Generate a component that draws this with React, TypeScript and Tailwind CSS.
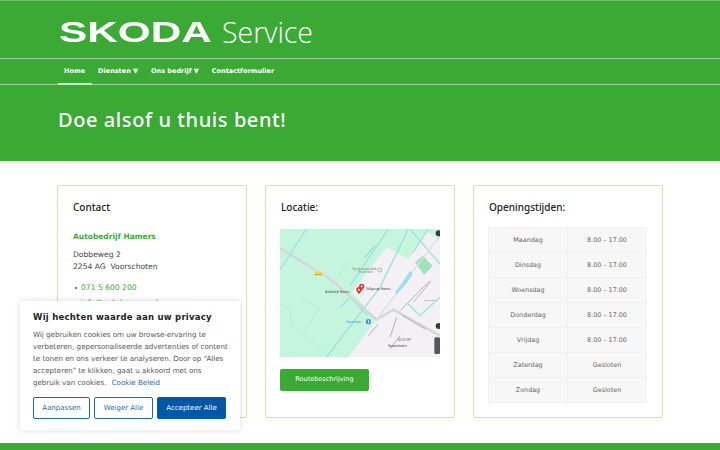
import React from 'react';

const hours = [
  ['Maandag', '8.00 – 17.00'],
  ['Dinsdag', '8.00 – 17.00'],
  ['Woensdag', '8.00 – 17.00'],
  ['Donderdag', '8.00 – 17.00'],
  ['Vrijdag', '8.00 – 17.00'],
  ['Zaterdag', 'Gesloten'],
  ['Zondag', 'Gesloten'],
];

const MapPicture: React.FC = () => (
  <svg viewBox="0 0 480 384" className="block w-full h-full blur-[0.3px]" style={{ fontFamily: '"Liberation Sans", sans-serif' }}>
    <rect width="480" height="384" fill="#c6f5dd" />
    {/* built up area */}
    <polygon points="215,190 320,55 385,90 440,10 480,30 480,384 205,384 290,270" fill="#f3f1f4" />
    <polygon points="405,100 428,80 458,110 432,138" fill="#9fe3bd" />
    {/* canals */}
    <g fill="none" stroke="#a0dfe6" strokeWidth="4">
      <path d="M0 122 L80 0" />
      <path d="M210 170 L325 0" />
      <path d="M180 235 L210 205 L265 262" />
      <path d="M140 384 L212 290 L300 175 L385 0" />
      <path d="M390 0 L480 105" />
      <path d="M445 0 L400 70" />
      <path d="M385 225 L420 260 L480 205" />
    </g>
    <g fill="none" stroke="#a8ead0" strokeWidth="2">
      <path d="M65 210 L120 237 L75 300" />
      <path d="M0 228 L30 240 L35 290 L150 384" />
      <path d="M150 170 L210 95" />
    </g>
    {/* roads */}
    <g fill="none" stroke="#d3d6dc" strokeWidth="7">
      <path d="M0 58 L150 150 L290 272 L340 242 L480 320" />
      <path d="M295 265 L480 20" strokeWidth="4" stroke="#dcdee2" />
    </g>
    <g fill="none" stroke="#b0b4bb" strokeWidth="3">
      <path d="M255 85 L285 50" stroke="#8fc9b0" />
      <path d="M360 245 L450 155" />
      <path d="M400 220 L452 158" />
      <path d="M365 258 L435 300" />
      <path d="M265 320 L295 285" />
      <path d="M330 325 L350 265" />
      <path d="M330 360 L360 320" />
    </g>
    <path d="M345 190 C 360 170, 375 150, 390 125 L398 135 C 385 160, 365 180, 350 195 Z" fill="#9fdcf0" />
    <rect x="463" y="325" width="17" height="50" rx="4" fill="#55585c" />
    <circle cx="476" cy="291" r="9" fill="#3a3c3f" />
    <circle cx="476" cy="13" r="9" fill="#3a3c3f" />
    {/* shield */}
    <rect x="103" y="129" width="24" height="11" rx="2" fill="#f7d154" />
    <text x="115" y="137.5" textAnchor="middle" fontSize="7" fill="#5b4a10">N448</text>
    {/* labels */}
    <text x="217" y="122" fontSize="8" fill="#7d8a85">Fysiotherapiepraktijk</text>
    <text x="235" y="133" fontSize="8" fill="#7d8a85">Voorschoten</text>
    <circle cx="299" cy="123" r="6" fill="none" stroke="#8a9490" strokeWidth="2" />
    <text x="136" y="191" fontSize="8.5" fill="#4a4a4a">Autobedrijf Hamers</text>
    <text x="258" y="182" fontSize="8.5" fill="#4a4a4a">Valkgarage Hamers</text>
    <text x="199" y="281" fontSize="8" fill="#4b8fe0">Voorschoten</text>
    <rect x="258" y="271" width="14" height="14" rx="3" fill="#4b8fe0" />
    <rect x="264" y="274" width="2.5" height="8" fill="#ffffff" />
    <text x="354" y="336" fontSize="8" fill="#6e6e6e">BLIJDORP</text>
    <text x="324" y="355" fontSize="10" fill="#3c3c3c">Voorschoten</text>
    <text x="432" y="215" fontSize="7" fill="#7b7f85">Bijdorplaan</text>
    {/* pins */}
    <g fill="#e0352b">
      <path d="M245 164 a8 8 0 0 1 8 8 c0 5 -5 8 -8 13 c-3 -5 -8 -8 -8 -13 a8 8 0 0 1 8 -8 Z" />
      <path d="M237 174 a8 8 0 0 1 8 8 c0 5 -5 8 -8 14 c-3 -6 -8 -9 -8 -14 a8 8 0 0 1 8 -8 Z" />
    </g>
    <circle cx="245" cy="172" r="3" fill="#ffffff" />
    <circle cx="237" cy="182" r="3" fill="#ffffff" />
  </svg>
);

const Card: React.FC<{ children: React.ReactNode }> = ({ children }) => (
  <div className="h-[233px] rounded-[3px] border border-[#dcdcb8] bg-white px-[15px] pt-[13px] shadow-[0_0_1px_#dcdcb8]">{children}</div>
);

const heading = "text-[10px] leading-[16px] font-medium text-[#222222] [font-family:'Noto_Sans',sans-serif]";

export default function App() {
  return (
    <div className="relative h-[450px] w-[720px] overflow-hidden bg-white text-[#444444] [font-family:'DejaVu_Sans',sans-serif]">
      <header className="h-[161px] bg-[#3aaa35] text-white">
        <div className="h-[59px] border-t border-b border-t-[#6cc067] border-b-[#9ad596] pl-[59px] flex items-center">
          <div className="flex items-center pt-[4px]">
            <span className="inline-block w-[153px] origin-left scale-x-[1.41] text-[30px] leading-[30px] font-bold [font-family:'Liberation_Sans',sans-serif]">
              SKODA
            </span>
            <span className="ml-[10px] text-[28.5px] leading-[30px] font-light [font-family:'Open_Sans',sans-serif]">
              Service
            </span>
          </div>
        </div>
        <nav className="h-[26px] border-b border-[#9ad596] pl-[57.5px] flex text-[6.5px] font-bold">
          <a className="flex items-center px-[6.5px] border-b-2 border-[#c8e8c5] -mb-[1px] pt-[1px]">Home</a>
          <a className="flex items-center px-[6.5px]">Diensten ▼</a>
          <a className="flex items-center px-[6.5px]">Ons bedrijf ▼</a>
          <a className="flex items-center px-[6.5px]">Contactformulier</a>
        </nav>
        <h1 className="pl-[58px] pt-[20px] text-[20px] leading-[30px] font-medium tracking-[0.58px] [font-family:'Noto_Sans',sans-serif]">
          Doe alsof u thuis bent!
        </h1>
      </header>

      <main className="mx-auto mt-[24px] grid w-[606px] grid-cols-3 gap-[18px]">
        <Card>
          <h2 className={heading}>Contact</h2>
          <p className="mt-[15px] text-[7.5px] leading-[13px] font-bold text-[#3aaa35]">Autobedrijf Hamers</p>
          <p className="mt-[6px] text-[7.6px] leading-[12px]">
            Dobbeweg 2
            <br />
            2254 AG&nbsp; Voorschoten
          </p>
          <ul className="mt-[7px] text-[7.6px] leading-[15px] text-[#3aaa35]">
            <li className="flex items-center gap-[4px] pl-[2px]">
              <span className="h-[2px] w-[2px] rounded-full bg-[#444444]" />
              071 5 600 200
            </li>
            <li className="flex items-center gap-[4px] pl-[2px]">
              <span className="h-[2px] w-[2px] rounded-full bg-[#444444]" />
              info@autohamers.nl
            </li>
          </ul>
        </Card>
        <Card>
          <h2 className={heading}>Locatie:</h2>
          <div className="mt-[14px] h-[128px] w-[160px] -ml-[1px]">
            <MapPicture />
          </div>
          <button className="mt-[12px] -ml-[1px] h-[22px] w-[89px] rounded-[2px] bg-[#3aaa35] text-[6.5px] text-white">
            Routebeschrijving
          </button>
        </Card>
        <Card>
          <h2 className={heading}>Openingstijden:</h2>
          <table className="mt-[12px] w-[159px] -ml-[1px] table-fixed border-collapse text-center text-[6.4px] text-[#666666]">
            <tbody>
              {hours.map(([day, time]) => (
                <tr key={day} className="h-[25px] bg-[#f7f7f7]">
                  <td className="border border-[#f0f0f0] pt-[1px]">{day}</td>
                  <td className="border border-[#f0f0f0] pt-[1px]">{time}</td>
                </tr>
              ))}
            </tbody>
          </table>
        </Card>
      </main>

      <footer className="absolute bottom-0 left-0 h-[7px] w-full bg-[#3aaa35]" />

      {/* cookie banner */}
      <div className="absolute left-[20px] top-[301px] h-[129px] w-[220px] rounded-[3px] bg-white pl-[13px] pr-[11px] pt-[10px] shadow-[0_0_6px_rgba(0,0,0,0.15)]">
        <h3 className="text-[8.5px] leading-[13px] font-bold tracking-[0.25px] text-[#212121] whitespace-nowrap">
          Wij hechten waarde aan uw privacy
        </h3>
        <p className="mt-[5px] text-[7.1px] leading-[12px] text-[#555555]">
          Wij gebruiken cookies om uw browse-ervaring te verbeteren, gepersonaliseerde advertenties of content te tonen en ons verkeer te analyseren. Door op “Alles accepteren” te klikken, gaat u akkoord met ons gebruik van cookies.{' '}
          <a className="ml-[3px] text-[#25689f]">Cookie Beleid</a>
        </p>
        <div className="mt-[8px] flex gap-[4px] text-[7px]">
          <button className="h-[22px] w-[57px] rounded-[2px] border-[1.5px] border-[#1f6a9c] text-[#2d6b9f]">Aanpassen</button>
          <button className="h-[22px] w-[59px] rounded-[2px] border-[1.5px] border-[#1f6a9c] text-[#2d6b9f]">Weiger Alle</button>
          <button className="h-[22px] w-[69px] rounded-[2px] bg-[#0056a7] text-white">Accepteer Alle</button>
        </div>
      </div>
    </div>
  );
}
